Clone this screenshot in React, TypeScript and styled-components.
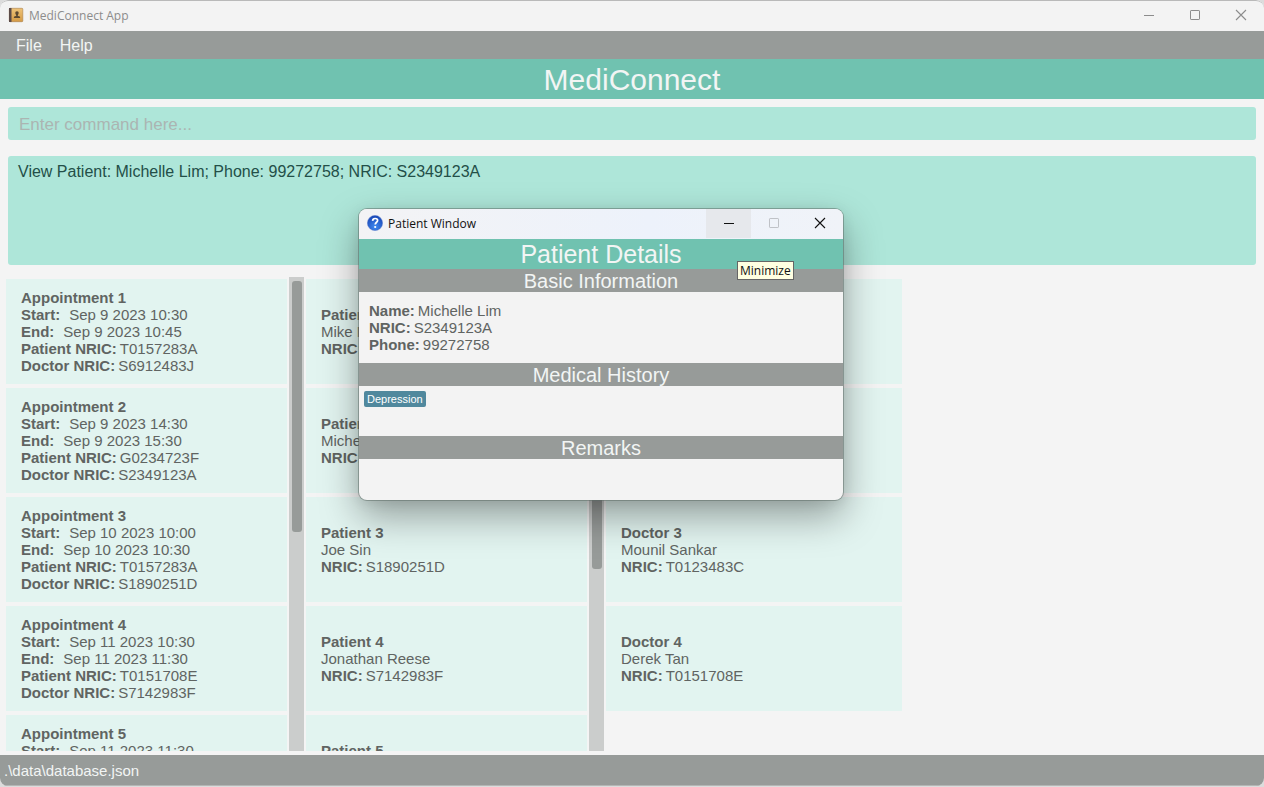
import React from "react";
import styled, { createGlobalStyle } from "styled-components";

const colors = {
  page: "#f4f4f4",
  bar: "#979b99",
  teal: "#70c2b0",
  mint: "#aee6d9",
  card: "#e2f4f0",
  track: "#cbcdcc",
  text: "#606462",
  light: "#f2f5f4",
};

const uiFont = `"Liberation Sans", Arial, sans-serif`;
const systemFont = `"Open Sans", "Segoe UI", sans-serif`;

const GlobalStyle = createGlobalStyle`
  * { box-sizing: border-box; }
  body { margin: 0; background: #dcdcdc; font-family: ${uiFont}; }
  button, input, textarea { font-family: inherit; }
`;

const AppWindow = styled.div`
  display: flex;
  flex-direction: column;
  height: calc(100vh - 1px);
  overflow: hidden;
  border-radius: 8px;
  background: ${colors.page};
`;

const TitleBar = styled.header<{ $active?: boolean }>`
  display: flex;
  flex: none;
  align-items: stretch;
  height: ${(p) => (p.$active ? 30 : 31)}px;
  border-top: ${(p) => (p.$active ? "none" : "1px solid #b9b9b9")};
  border-radius: 8px 8px 0 0;
  background: ${(p) => (p.$active ? "linear-gradient(90deg, #f3f3f5, #edf2fb 60%, #f0f3f8)" : "#f3f3f3")};
  color: ${(p) => (p.$active ? "#111" : "#8c8c8c")};
  font-family: ${systemFont};
  font-size: 12px;
`;

const TitleLabel = styled.div`
  display: flex;
  flex: 1;
  align-items: center;
  gap: 5px;
  padding-left: 8px;
  font-size: 12px;
  line-height: 16px;

  svg { margin-bottom: 2px; }
`;

const WindowButton = styled.button<{ $hovered?: boolean }>`
  display: flex;
  align-items: center;
  justify-content: center;
  width: ${(p) => (p.$hovered ? 45 : 46)}px;
  margin-bottom: 1px;
  padding: 0 0 1px;
  border: 0;
  background: ${(p) => (p.$hovered ? "#e6e8ec" : "transparent")};
  color: inherit;

  &:disabled { color: #bfc2c7; }
`;

const MenuBar = styled.nav`
  display: flex;
  flex: none;
  gap: 18px;
  height: 28px;
  padding: 2px 16px 0;
  background: ${colors.bar};
`;

const MenuButton = styled.button`
  padding: 0;
  border: 0;
  background: none;
  color: ${colors.light};
  font-size: 16px;
  line-height: 26px;
`;

const Banner = styled.h1`
  flex: none;
  margin: 0;
  padding-top: 2px;
  background: ${colors.teal};
  color: ${colors.light};
  font-size: 30px;
  font-weight: 400;
  line-height: 38px;
  text-align: center;
`;

const CommandInput = styled.input`
  flex: none;
  height: 33px;
  margin: 8px 8px 0;
  padding: 2px 11px 0;
  border: 0;
  border-radius: 3px;
  outline: none;
  background: ${colors.mint};
  color: #1c3d36;
  font-size: 17px;

  &::placeholder { color: #abb5b2; opacity: 1; }
`;

const ResultBox = styled.textarea`
  flex: none;
  height: 109px;
  margin: 16px 8px 0;
  padding: 6px 10px;
  border: 0;
  border-radius: 3px;
  outline: none;
  resize: none;
  background: ${colors.mint};
  color: #234f48;
  font-size: 16px;
  line-height: 20px;
`;

const Lists = styled.main`
  display: grid;
  flex: 1;
  grid-template-columns: repeat(3, minmax(0, 300px));
  min-height: 0;
  margin: 12px 4px 4px;
`;

const Column = styled.section`
  display: flex;
  gap: 2px;
  min-height: 0;
  padding-left: 2px;
  overflow: hidden;
`;

const CardList = styled.ul<{ $inset?: boolean }>`
  display: flex;
  flex: 1;
  flex-direction: column;
  gap: 4px;
  margin: 0;
  padding: 2px ${(p) => (p.$inset ? 2 : 0)}px 0 0;
  list-style: none;
`;

const Card = styled.li<{ $top?: number }>`
  display: flex;
  flex: none;
  flex-direction: column;
  height: 105px;
  padding: ${(p) => p.$top ?? 27}px 15px 0;
  background: ${colors.card};
  color: ${colors.text};
  font-size: 15px;
  line-height: 17px;
`;

const Line = styled.div<{ $gap?: number }>`
  display: flex;
  gap: ${(p) => p.$gap ?? 3}px;
  white-space: nowrap;
`;

const Track = styled.div`
  flex: none;
  width: 15px;
  padding: 4px 2px 0 3px;
  background: ${colors.track};
`;

const Thumb = styled.div<{ $size: number }>`
  height: ${(p) => p.$size}%;
  border-radius: 3px;
  background: ${colors.bar};
`;

const StatusBar = styled.footer`
  flex: none;
  height: 31px;
  padding: 0 4px;
  border-bottom: 1px solid #b4b6b5;
  background: ${colors.bar};
  color: ${colors.light};
  font-size: 15px;
  line-height: 31px;
`;

const Dialog = styled.div`
  position: absolute;
  top: 209px;
  left: 359px;
  width: 484px;
  border-radius: 8px;
  background: #f3f3f3;
  box-shadow: 0 0 0 1px rgba(90, 105, 100, 0.5), 0 16px 38px rgba(0, 0, 0, 0.36), 0 2px 14px rgba(0, 0, 0, 0.08);
`;

const DialogTitle = styled.h2`
  margin: 0;
  background: ${colors.teal};
  color: ${colors.light};
  font-size: 25px;
  font-weight: 400;
  line-height: 30px;
  text-align: center;
`;

const SectionTitle = styled.h3`
  margin: 0;
  padding-top: 2px;
  background: ${colors.bar};
  color: ${colors.light};
  font-size: 20px;
  font-weight: 400;
  line-height: 21px;
  text-align: center;
`;

const BasicInfo = styled.div`
  padding: 10px;
  color: ${colors.text};
  font-size: 15px;
  line-height: 17px;
`;

const History = styled.div`
  display: flex;
  align-items: flex-start;
  height: 50px;
  padding: 5px;
`;

const Tag = styled.span`
  padding: 0 3px;
  border-radius: 2px;
  background: #50889d;
  color: #fff;
  font-size: 11px;
  line-height: 16px;
`;

const Remarks = styled.div`
  height: 41px;
`;

const Tooltip = styled.div`
  position: absolute;
  top: 52px;
  left: 378px;
  padding: 0 2px;
  border: 1px solid #656565;
  background: #ffffe1;
  color: #111;
  font-family: ${systemFont};
  font-size: 12px;
  line-height: 17px;
`;

function MinimizeIcon() {
  return (
    <svg width="12" height="12" viewBox="0 0 12 12" stroke="currentColor" aria-hidden="true">
      <path d="M1 6.5H11" />
    </svg>
  );
}

function MaximizeIcon() {
  return (
    <svg width="12" height="12" viewBox="0 0 12 12" fill="none" stroke="currentColor" aria-hidden="true">
      <rect x="1.500" y="1.500" width="9" height="9" rx=".6" />
    </svg>
  );
}

function CloseIcon() {
  return (
    <svg width="12" height="12" viewBox="0 0 12 12" stroke="currentColor" strokeWidth="1.1" aria-hidden="true">
      <path d="M1 1L11 11M11 1L1 11" />
    </svg>
  );
}

function AddressBookIcon() {
  return (
    <svg width="16" height="16" viewBox="0 0 16 16" aria-hidden="true">
      <defs>
        <linearGradient id="cover" x1="0" y1="0" x2="0" y2="1">
          <stop offset="0" stopColor="#eec378" />
          <stop offset="1" stopColor="#d59b45" />
        </linearGradient>
      </defs>
      <rect x="1.300" y="1.300" width="13.500" height="13.400" rx=".8" fill="url(#cover)" stroke="#a98049" strokeWidth=".6" />
      <path d="M1 1h2.500v14H1z" fill="#5b4b48" />
      <path d="M9 4.200c1.200 0 1.800.8 1.700 1.900-.1.900-.5 1.500-.9 1.900v.7l2.300 1V11H5.900V9.700l2.300-1V8C7.800 7.600 7.300 7 7.300 6.100 7.200 5 7.800 4.200 9 4.200z" fill="#5d4930" />
    </svg>
  );
}

function HelpIcon() {
  return (
    <svg width="16" height="16" viewBox="0 0 16 16" aria-hidden="true">
      <defs>
        <radialGradient id="orb" cx=".5" cy=".75" r=".75">
          <stop offset="0" stopColor="#3f8af0" />
          <stop offset="1" stopColor="#1744b4" />
        </radialGradient>
      </defs>
      <circle cx="8" cy="8" r="7.600" fill="url(#orb)" stroke="#5577c8" strokeWidth=".5" />
      <path d="M5.600 5.900C5.700 4.300 6.700 3.500 8.100 3.500c1.500 0 2.500.8 2.500 2 0 1.700-2.400 1.900-2.400 4.100" fill="none" stroke="#fff" strokeWidth="1.700" />
      <circle cx="8.200" cy="12" r="1.100" fill="#fff" />
    </svg>
  );
}

interface Appointment {
  start: string;
  end?: string;
  patient?: string;
  doctor?: string;
}

interface Person {
  name?: string;
  nric?: string;
}

const appointments: Appointment[] = [
  { start: "Sep 9 2023 10:30", end: "Sep 9 2023 10:45", patient: "T0157283A", doctor: "S6912483J" },
  { start: "Sep 9 2023 14:30", end: "Sep 9 2023 15:30", patient: "G0234723F", doctor: "S2349123A" },
  { start: "Sep 10 2023 10:00", end: "Sep 10 2023 10:30", patient: "T0157283A", doctor: "S1890251D" },
  { start: "Sep 11 2023 10:30", end: "Sep 11 2023 11:30", patient: "T0151708E", doctor: "S7142983F" },
  { start: "Sep 11 2023 11:30" },
];

const patients: Person[] = [
  { name: "Mike M" },
  { name: "Michelle Lim", nric: "S2349123A" },
  { name: "Joe Sin", nric: "S1890251D" },
  { name: "Jonathan Reese", nric: "S7142983F" },
  {},
];

const doctors: Person[] = [
  {},
  {},
  { name: "Mounil Sankar", nric: "T0123483C" },
  { name: "Derek Tan", nric: "T0151708E" },
];

function Field({ label, value, gap }: { label: string; value?: string; gap?: number }) {
  return (
    <Line $gap={gap}>
      <b>{label}</b>
      {value && <span>{value}</span>}
    </Line>
  );
}

function AppointmentCard({ title, item }: { title: string; item: Appointment }) {
  return (
    <Card $top={10}>
      <b>{title}</b>
      <Field label="Start:" value={item.start} gap={9} />
      {item.end && <Field label="End:" value={item.end} gap={9} />}
      {item.patient && <Field label="Patient NRIC:" value={item.patient} />}
      {item.doctor && <Field label="Doctor NRIC:" value={item.doctor} />}
    </Card>
  );
}

function PersonCard({ title, person }: { title: string; person: Person }) {
  return (
    <Card>
      <b>{title}</b>
      {person.name && (
        <>
          <Line>{person.name}</Line>
          <Field label="NRIC:" value={person.nric} />
        </>
      )}
    </Card>
  );
}

function WindowControls({ dialog }: { dialog?: boolean }) {
  return (
    <>
      <WindowButton aria-label="Minimize" $hovered={dialog}><MinimizeIcon /></WindowButton>
      <WindowButton aria-label="Maximize" disabled={dialog}><MaximizeIcon /></WindowButton>
      <WindowButton aria-label="Close"><CloseIcon /></WindowButton>
    </>
  );
}

function PatientWindow() {
  return (
    <Dialog role="dialog" aria-label="Patient Window">
      <TitleBar $active>
        <TitleLabel><HelpIcon />Patient Window</TitleLabel>
        <WindowControls dialog />
      </TitleBar>
      <DialogTitle>Patient Details</DialogTitle>
      <SectionTitle>Basic Information</SectionTitle>
      <BasicInfo>
        <Field label="Name:" value="Michelle Lim" />
        <Field label="NRIC:" value="S2349123A" />
        <Field label="Phone:" value="99272758" />
      </BasicInfo>
      <SectionTitle>Medical History</SectionTitle>
      <History><Tag>Depression</Tag></History>
      <SectionTitle>Remarks</SectionTitle>
      <Remarks />
      <Tooltip role="tooltip">Minimize</Tooltip>
    </Dialog>
  );
}

export default function App() {
  return (
    <>
      <GlobalStyle />
      <AppWindow>
        <TitleBar>
          <TitleLabel><AddressBookIcon />MediConnect App</TitleLabel>
          <WindowControls />
        </TitleBar>
        <MenuBar>
          <MenuButton>File</MenuButton>
          <MenuButton>Help</MenuButton>
        </MenuBar>
        <Banner>MediConnect</Banner>
        <CommandInput aria-label="Command" placeholder="Enter command here..." />
        <ResultBox
          aria-label="Result"
          readOnly
          defaultValue="View Patient: Michelle Lim; Phone: 99272758; NRIC: S2349123A"
        />
        <Lists>
          <Column aria-label="Appointments">
            <CardList>
              {appointments.map((a, i) => (
                <AppointmentCard key={i} title={`Appointment ${i + 1}`} item={a} />
              ))}
            </CardList>
            <Track><Thumb $size={53.4} /></Track>
          </Column>
          <Column aria-label="Patients">
            <CardList>
              {patients.map((p, i) => (
                <PersonCard key={i} title={`Patient ${i + 1}`} person={p} />
              ))}
            </CardList>
            <Track><Thumb $size={61.3} /></Track>
          </Column>
          <Column aria-label="Doctors">
            <CardList $inset>
              {doctors.map((d, i) =>
                d.name ? <PersonCard key={i} title={`Doctor ${i + 1}`} person={d} /> : <Card key={i} />
              )}
            </CardList>
          </Column>
        </Lists>
        <StatusBar>.\data\database.json</StatusBar>
      </AppWindow>
      <PatientWindow />
    </>
  );
}
